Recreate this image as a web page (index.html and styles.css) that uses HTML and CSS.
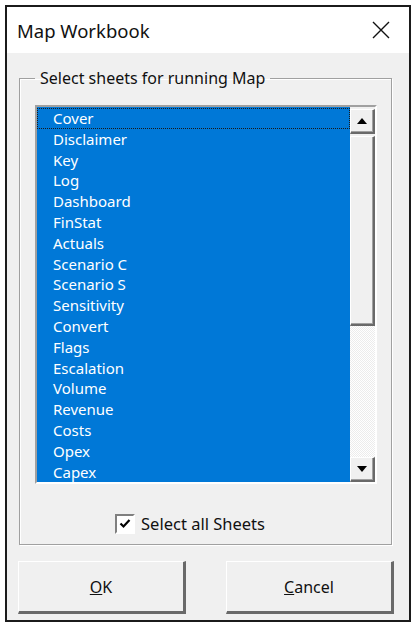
FILE: index.html
```html
<!DOCTYPE html>
<html>
<head>
<meta charset="utf-8">
<link rel="stylesheet" href="styles.css">
</head>
<body>
<div class="window">
  <div class="titlebar">
    <span class="title">Map Workbook</span>
    <svg class="close" width="18" height="18" viewBox="0 0 18 18"><path d="M1 1 L17 17 M17 1 L1 17" stroke="#111" stroke-width="1.4" fill="none"/></svg>
  </div>
  <div class="content">
    <fieldset class="group">
      <legend class="legend">Select sheets for running Map</legend>
      <div class="listbox">
        <div class="items">
          <div class="item focus">Cover</div>
          <div class="item">Disclaimer</div>
          <div class="item">Key</div>
          <div class="item">Log</div>
          <div class="item">Dashboard</div>
          <div class="item">FinStat</div>
          <div class="item">Actuals</div>
          <div class="item">Scenario C</div>
          <div class="item">Scenario S</div>
          <div class="item">Sensitivity</div>
          <div class="item">Convert</div>
          <div class="item">Flags</div>
          <div class="item">Escalation</div>
          <div class="item">Volume</div>
          <div class="item">Revenue</div>
          <div class="item">Costs</div>
          <div class="item">Opex</div>
          <div class="item">Capex</div>
        </div>
        <div class="scrollbar">
          <div class="sbtn"><span class="arrow up"></span></div>
          <div class="thumb"></div>
          <div class="track"></div>
          <div class="sbtn"><span class="arrow down"></span></div>
        </div>
      </div>
      <div class="checkrow">
        <span class="checkbox"><svg width="12" height="11" viewBox="0 0 12 11"><path d="M1.5 5.5 L4.5 8.5 L10.5 2" stroke="#000" stroke-width="2.2" fill="none"/></svg></span>
        <span class="checklabel">Select all Sheets</span>
      </div>
    </fieldset>
    <div class="buttons">
      <div class="btn"><span><u>O</u>K</span></div>
      <div class="btn"><span><u>C</u>ancel</span></div>
    </div>
  </div>
</div>
</body>
</html>
```
FILE: styles.css
```css
* { box-sizing: border-box; }
body {
  margin: 0;
  background: #fff;
  font-family: "Noto Sans", "Open Sans", sans-serif;
}
.window {
  margin: 5px 0 0 5px;
  width: 406px;
  height: 617px;
  border: 2px solid #1b1b1b;
  background: #f0f0f0;
  display: flex;
  flex-direction: column;
}
.titlebar {
  height: 46px;
  background: #fff;
  display: flex;
  align-items: center;
  justify-content: space-between;
  padding: 0 19px 0 10px;
}
.title {
  font-size: 18.5px;
  color: #111;
}
.content {
  display: flex;
  flex-direction: column;
  padding: 14px 0 0 12px;
}
.group {
  margin: 0;
  width: 373px;
  height: 478px;
  padding: 16px 14px 0 15px;
  border: 1px solid #a0a0a0;
  box-shadow: inset 1px 1px 0 #fff, 1px 1px 0 #fff;
}
.legend {
  margin-left: 0;
  padding: 0 5px 0 5px;
  font-size: 16px;
  line-height: 22px;
  color: #111;
}
.listbox {
  height: 379px;
  display: flex;
  border-style: solid;
  border-width: 2px;
  border-color: #a0a0a0 #fff #fff #a0a0a0;
  background: #0078d7;
  overflow: hidden;
}
.items {
  flex: 1;
  padding-top: 1px;
  overflow: hidden;
}
.item {
  height: 20.8px;
  line-height: 19px;
  padding-left: 15px;
  font-size: 15px;
  color: #fff;
  border: 1px solid transparent;
}
.item.focus {
  border: 1px dotted #1a1a1a;
}
.scrollbar {
  width: 25px;
  display: flex;
  flex-direction: column;
  background: #f0f0f0;
  padding-top: 2px;
}
.sbtn, .thumb {
  background: #f0f0f0;
  border-style: solid;
  border-width: 1px 2px 2px 1px;
  border-color: #fff #696969 #696969 #fff;
  box-shadow: inset -1px -1px 0 #a0a0a0;
}
.sbtn {
  height: 25px;
  display: flex;
  align-items: center;
  justify-content: center;
}
.thumb {
  height: 190px;
  margin-top: 2px;
}
.track {
  flex: 1;
  background-color: #f7f7f7;
  background-image: repeating-conic-gradient(#ffffff 0 25%, #ececec 0 50%);
  background-size: 2px 2px;
}
.arrow {
  width: 0;
  height: 0;
  border-left: 5px solid transparent;
  border-right: 5px solid transparent;
}
.arrow.up { border-bottom: 6px solid #000; }
.arrow.down { border-top: 6px solid #000; }
.checkrow {
  display: flex;
  align-items: center;
  justify-content: center;
  gap: 6px;
  margin-top: 28px;
  padding-right: 32px;
}
.checkbox {
  width: 20px;
  height: 20px;
  background: #fff;
  border-style: solid;
  border-width: 2px;
  border-color: #808080 #fff #fff #808080;
  display: flex;
  align-items: center;
  justify-content: center;
}
.checklabel {
  font-size: 16.5px;
  color: #111;
}
.buttons {
  display: flex;
  gap: 40px;
  margin-top: 16px;
  margin-left: -1px;
}
.btn {
  width: 168px;
  height: 53px;
  background: #f0f0f0;
  border-style: solid;
  border-width: 1px 3px 3px 1px;
  border-color: #fff #696969 #696969 #fff;
  display: flex;
  align-items: center;
  justify-content: center;
  font-size: 16px;
  color: #111;
}
```
